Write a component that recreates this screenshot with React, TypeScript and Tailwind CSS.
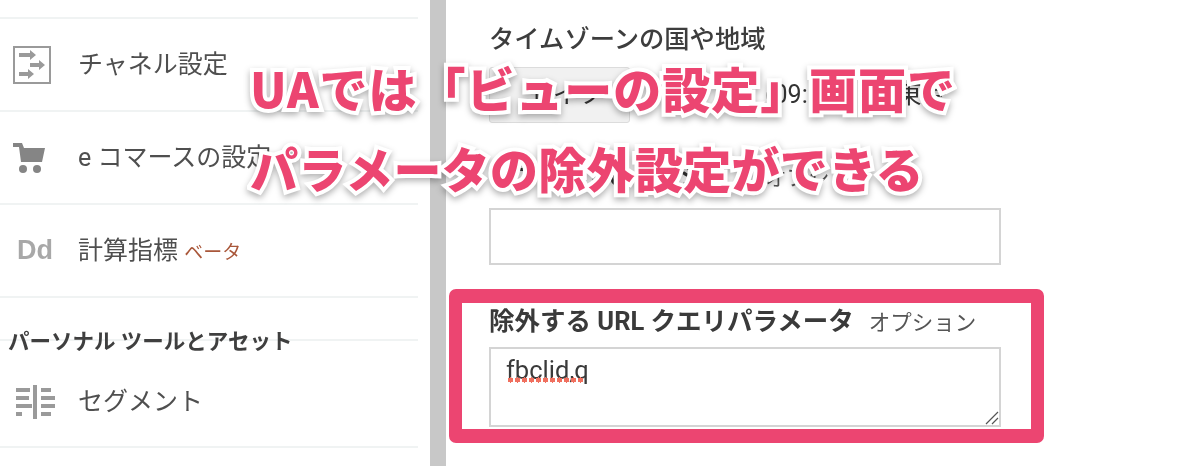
import type { ReactNode } from "react";

const jp = "font-['Roboto','Noto_Sans_CJK_JP',sans-serif]";

function ChannelIcon() {
  return (
    <svg width="38" height="38" viewBox="0 0 38 38" className="text-[#9a9a9a]">
      <rect x="1" y="1" width="36" height="36" fill="none" stroke="currentColor" strokeWidth="2" />
      <g fill="currentColor">
        <path d="M6 7h11V4l6 5-6 5v-3H6z" />
        <path d="M17 17h9v-3l6 5-6 5v-3h-9z" />
        <path d="M6 26h9v-3l6 5-6 5v-3H6z" />
      </g>
    </svg>
  );
}

function CartIcon() {
  return (
    <svg width="32" height="30" viewBox="0 0 32 30" className="text-[#858585]">
      <path fill="currentColor" d="M0 0h9l2 5h21l-3 14H8L6 4H0z" />
      <circle cx="10" cy="26" r="4" fill="currentColor" />
      <circle cx="24" cy="26" r="4" fill="currentColor" />
    </svg>
  );
}

function SegmentIcon() {
  return (
    <svg width="40" height="34" viewBox="0 0 40 34" className="text-[#9a9a9a]">
      <g fill="currentColor">
        <rect x="18" y="0" width="4" height="34" />
        <rect x="1" y="3" width="14" height="4" />
        <rect x="1" y="11" width="13" height="4" />
        <rect x="1" y="19" width="16" height="4" />
        <rect x="1" y="27" width="6" height="4" />
        <rect x="26" y="3" width="10" height="4" />
        <rect x="26" y="11" width="14" height="4" />
        <rect x="26" y="19" width="14" height="4" />
        <rect x="26" y="27" width="10" height="4" />
      </g>
    </svg>
  );
}

function NavRow({ icon, children }: { icon: ReactNode; children: ReactNode }) {
  return (
    <div className="flex h-[93px] items-center border-b-2 border-[#f0f3f3]">
      <div className="flex w-[78px] shrink-0 justify-start pl-[13px]">{icon}</div>
      <div className="text-[25px] text-[#4f4f4f]">{children}</div>
    </div>
  );
}

const headline =
  "absolute left-[250px] whitespace-nowrap font-['Noto_Sans_CJK_JP',sans-serif] text-[48px] font-black leading-[56px] text-[#ec4571] [paint-order:stroke_fill] [-webkit-text-stroke:8px_white] drop-shadow-[0_3px_3px_rgba(0,0,0,0.3)]";

export default function App() {
  return (
    <div className={`relative flex h-[466px] w-[1200px] overflow-hidden bg-white blur-[0.4px] ${jp}`}>
      <aside className="w-[418px] shrink-0 pt-[17px]">
        <div className="border-b-2 border-[#f0f3f3]" />
        <NavRow icon={<ChannelIcon />}>チャネル設定</NavRow>
        <NavRow icon={<CartIcon />}>e コマースの設定</NavRow>
        <NavRow
          icon={<span className="pl-[4px] font-['Liberation_Sans',sans-serif] text-[27px] font-bold text-[#a8a8a8]">Dd</span>}
        >
          計算指標 <span className="text-[19px] text-[#a9573a]">ベータ</span>
        </NavRow>
        <div className="relative h-[150px] border-b-2 border-[#f0f3f3]">
          <div className="border-b-2 border-[#f0f3f3] pt-[41px]" />
          <div className="absolute left-[8px] top-[28px] text-[21.5px] font-bold text-[#3f3f3f]">
            パーソナル ツールとアセット
          </div>
          <div className="flex h-[107px] items-center pt-[14px]">
            <div className="flex w-[78px] shrink-0 justify-start pl-[15px]">
              <SegmentIcon />
            </div>
            <div className="text-[25px] text-[#4f4f4f]">セグメント</div>
          </div>
        </div>
      </aside>

      <div className="ml-[12px] h-full w-[16px] shrink-0 bg-[#c8c8c8]" />

      <main className="pl-[43px] pt-[25px]">
        <div className="text-[25.3px] font-medium leading-[30px] text-[#3d3d3d]">タイムゾーンの国や地域</div>
        <div className="mt-[12px] flex items-center">
          <div className="flex h-[56px] w-[141px] items-center rounded-[3px] border border-[#dcdcdc] bg-[#f1f1f1] pl-[38px] text-[25px] text-[#333]">
            ドイツ
          </div>
          <div className="ml-[135px] flex text-[25px] text-[#333]">
            <span>(09:00)</span>
            <span className="ml-[52px]">東京</span>
          </div>
        </div>
        <div className="mt-[38px] flex items-baseline leading-[32px] text-[#333]">
          <span className="w-[276px] text-[24px] font-bold">デフォルトのページ</span>
          <span className="text-[21.5px] text-[#555]">オプション</span>
        </div>
        <div className="mt-[14px] h-[57px] w-[512px] border-2 border-[#d4d4d4]" />

        <div className="mt-[40px] flex items-baseline">
          <span className="text-[25.5px] font-bold leading-[32px] text-[#3a3a3a]">除外する URL クエリパラメータ</span>
          <span className="ml-[15px] text-[21.5px] text-[#555]">オプション</span>
        </div>
        <div className="relative mt-[8px] h-[80px] w-[512px] border-2 border-[#d4d4d4] pl-[15px] pt-[3px] text-[25.5px] leading-[36px] text-[#3a3a3a]">
          <span>fbclid,q</span>
          {/* spell-check squiggle */}
          <div className="absolute left-[16px] top-[28px] h-[6px] w-[78px] bg-[radial-gradient(circle,#f0705f_2.5px,transparent_2.6px)] bg-[length:7px_6px]" />
          <svg width="14" height="14" viewBox="0 0 14 14" className="absolute bottom-0 right-0 text-[#555]">
            <path d="M1 13 13 1M7 13l6-6" stroke="currentColor" strokeWidth="1.2" />
          </svg>
        </div>
      </main>

      {/* pink highlight box over the field */}
      <div className="absolute left-[449px] top-[289px] h-[154px] w-[595px] rounded-[7px] border-x-[13px] border-y-[14px] border-[#ec4571]" />

      {/* annotation text */}
      <div className={`${headline} top-[59px] tracking-[0.95px]`}>UAでは「ビューの設定」画面で</div>
      <div className={`${headline} top-[139px] tracking-[0.3px]`}>パラメータの除外設定ができる</div>
    </div>
  );
}
